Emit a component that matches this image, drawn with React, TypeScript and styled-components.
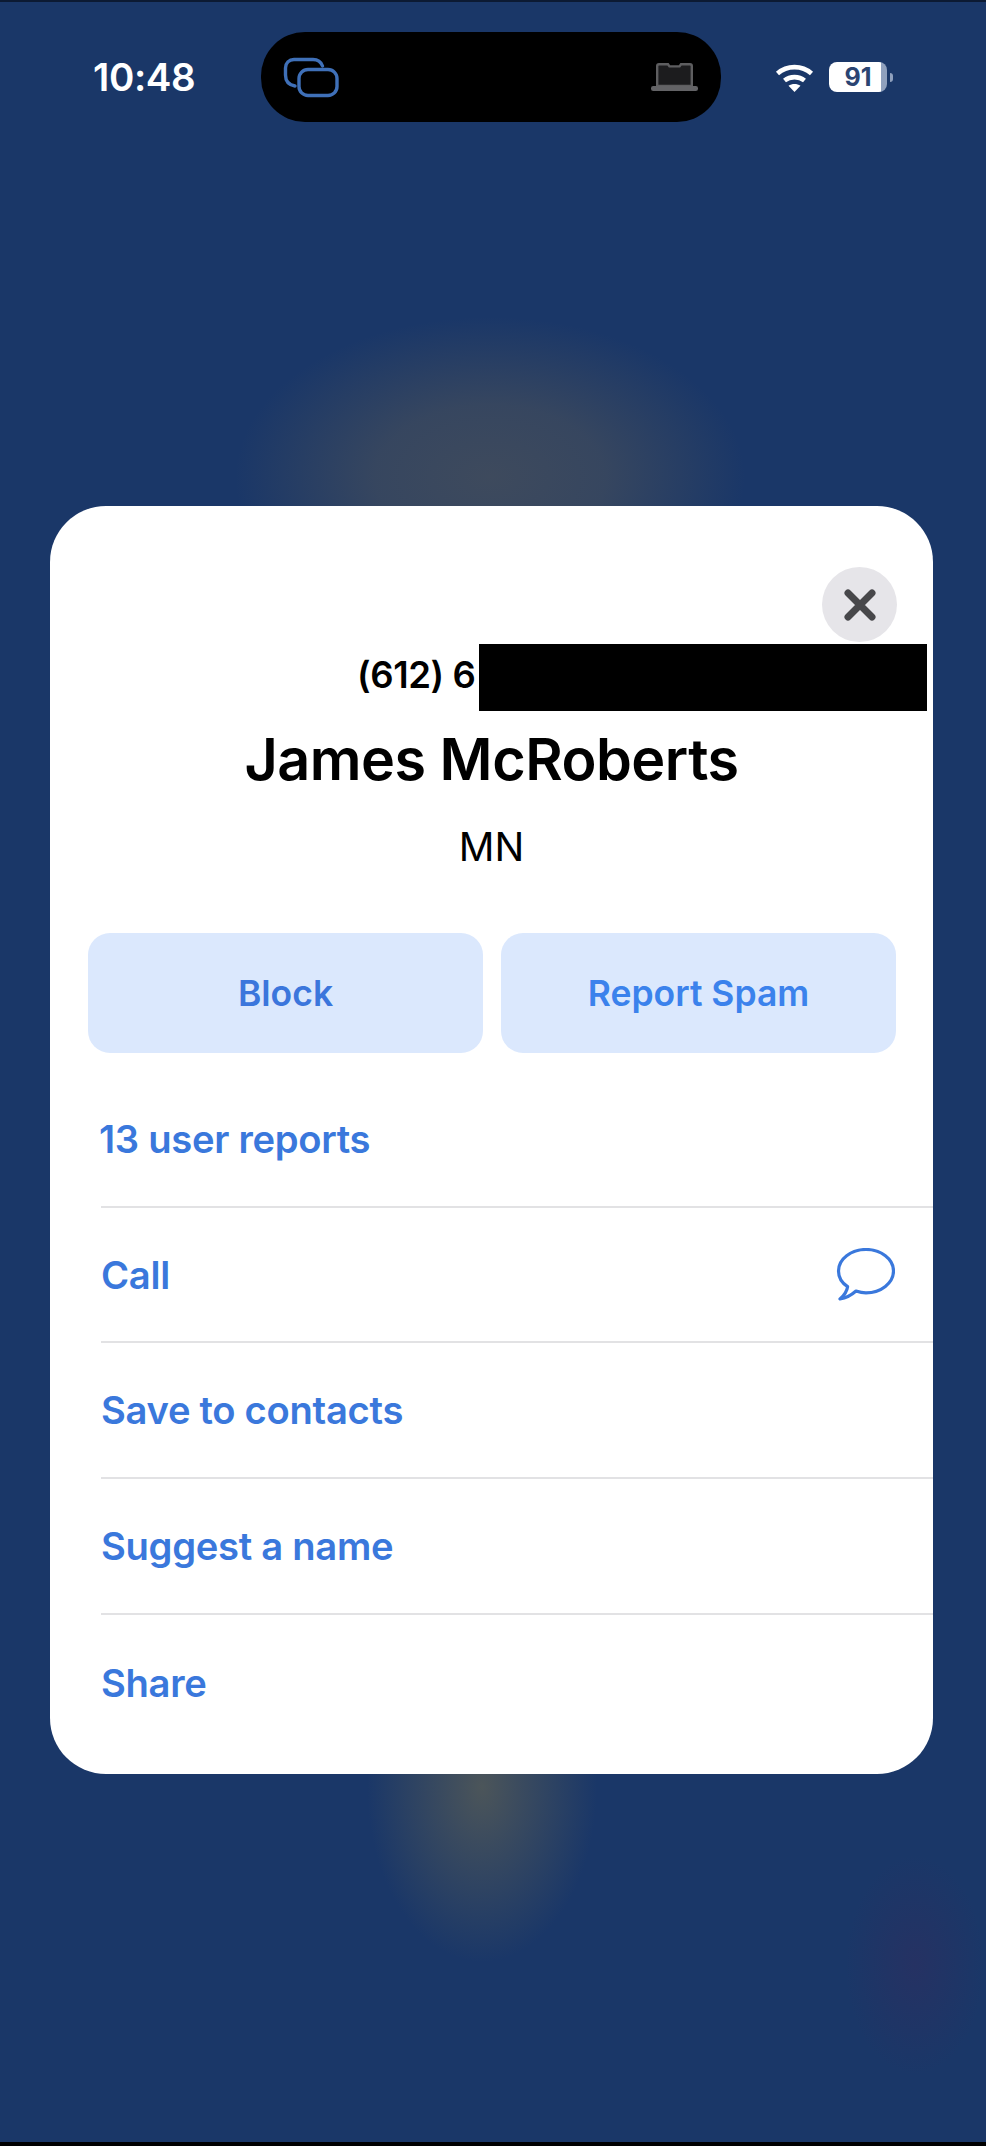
import React from 'react';
import styled, { createGlobalStyle } from 'styled-components';

const GlobalStyle = createGlobalStyle`
  html, body {
    margin: 0;
    padding: 0;
    background: #1a3768;
  }
  * {
    box-sizing: border-box;
  }
`;

const Page = styled.div`
  width: 986px;
  height: 2146px;
  overflow: hidden;
  border-top: 2px solid #0c1a33;
  border-bottom: 4px solid #000;
  font-family: Inter, 'Liberation Sans', sans-serif;
  background:
    radial-gradient(ellipse 115px 175px at 482px 1785px, rgba(125, 115, 75, 0.5) 0%, rgba(125, 115, 75, 0.32) 35%, rgba(125, 115, 75, 0) 100%),
    radial-gradient(ellipse 255px 160px at 490px 475px, rgba(120, 105, 75, 0.38) 0%, rgba(120, 105, 75, 0.3) 45%, rgba(120, 105, 75, 0) 100%),
    radial-gradient(ellipse 70px 110px at 915px 1963px, rgba(70, 35, 85, 0.26), rgba(70, 35, 85, 0) 100%),
    #1a3768;
`;

const StatusBar = styled.div`
  display: flex;
  align-items: center;
  height: 90px;
  margin-top: 30px;
  padding-left: 93px;
`;

const Time = styled.span`
  width: 168px;
  color: #fff;
  font-size: 38.5px;
  font-weight: 600;
  letter-spacing: -0.4px;
`;

const Island = styled.div`
  display: flex;
  align-items: center;
  justify-content: space-between;
  width: 460px;
  height: 90px;
  padding: 0 23px 0 22px;
  border-radius: 44px;
  background: #000;
`;

const StatusIcons = styled.div`
  display: flex;
  align-items: center;
  gap: 15px;
  margin-left: 54px;
`;

const Battery = styled.div`
  display: flex;
  align-items: center;
  gap: 3px;
`;

const BatteryBody = styled.div`
  display: flex;
  align-items: center;
  justify-content: center;
  width: 58px;
  height: 30px;
  border-radius: 8px;
  background: linear-gradient(90deg, #fff 0 90%, #8fa0bd 90%);
  color: #2a4472;
  font-size: 25px;
  font-weight: 700;
`;

const BatteryTip = styled.div`
  width: 3px;
  height: 9px;
  border-radius: 0 3px 3px 0;
  background: #8fa0bd;
`;

const Card = styled.div`
  display: flex;
  flex-direction: column;
  width: 883px;
  height: 1268px;
  margin: 384px 0 0 50px;
  padding-top: 61px;
  overflow: hidden;
  border-radius: 56px;
  background: #fff;
`;

const CloseRow = styled.div`
  display: flex;
  justify-content: flex-end;
  padding-right: 36px;
`;

const CloseButton = styled.button`
  display: flex;
  align-items: center;
  justify-content: center;
  width: 75px;
  height: 75px;
  padding: 0;
  border: none;
  border-radius: 50%;
  background: #e6e5e9;
`;

const PhoneRow = styled.div`
  display: flex;
  align-items: center;
  height: 68px;
  margin-top: 1px;
  padding-left: 307px;
`;

const PhoneText = styled.span`
  width: 122px;
  padding-bottom: 4px;
  color: #000;
  font-size: 36.5px;
  font-weight: 600;
  letter-spacing: -0.4px;
  white-space: nowrap;
`;

const Redaction = styled.div`
  width: 448px;
  height: 67px;
  background: #000;
`;

const Name = styled.h1`
  margin: 15px 0 0;
  color: #000;
  font-size: 57.5px;
  line-height: 66px;
  font-weight: 600;
  text-align: center;
  letter-spacing: -0.5px;
`;

const Region = styled.div`
  margin-top: 32px;
  color: #000;
  font-size: 39.5px;
  line-height: 46px;
  font-weight: 400;
  text-align: center;
`;

const Actions = styled.div`
  display: grid;
  grid-template-columns: 395px 395px;
  gap: 18px;
  margin-top: 63px;
  padding-left: 38px;
`;

const ActionButton = styled.button<{ $bright?: boolean }>`
  height: 120px;
  border: none;
  border-radius: 22px;
  background: #dbe8fd;
  color: ${(p) => (p.$bright ? '#3b82ec' : '#3b76dc')};
  font-family: inherit;
  font-size: 35.5px;
  font-weight: 600;
`;

const Rows = styled.div`
  display: flex;
  flex-direction: column;
  margin: 19px 0 0 51px;
`;

const Row = styled.div<{ $last?: boolean }>`
  display: flex;
  align-items: center;
  justify-content: space-between;
  height: 135.7px;
  padding-right: 38px;
  border-bottom: ${(p) => (p.$last ? 'none' : '2px solid #e2e2e4')};
  color: #3a78dc;
  font-size: 38.2px;
  font-weight: 600;
  letter-spacing: -0.3px;
`;

const RowLabel = styled.span<{ $shift?: boolean }>`
  margin-left: ${(p) => (p.$shift ? '-2px' : '0')};
`;

const rows = ['13 user reports', 'Call', 'Save to contacts', 'Suggest a name', 'Share'];

const CopiesIcon = () => (
  <svg width="56" height="41" viewBox="0 0 56 41" fill="none" stroke="#3f70b8" strokeWidth="3.4">
    <path d="M12 29 C6 28 2.5 24 2.5 18 V11 C2.5 6 6 2.5 11 2.5 H30 C35 2.5 38 5 39.5 9" strokeLinecap="round" />
    <rect x="16" y="12.5" width="38" height="26" rx="9" />
  </svg>
);

const LaptopIcon = () => (
  <svg width="47" height="28" viewBox="0 0 47 28">
    <path d="M8 1.2 H17 L18.5 3.4 H28.5 L30 1.2 H39 C40 1.2 40.8 2 40.8 3 V23 H6.2 V3 C6.2 2 7 1.2 8 1.2 Z" fill="#1c1c1e" stroke="#5e5e60" strokeWidth="2.4" />
    <rect x="0" y="23" width="47" height="5" rx="2.2" fill="#636366" />
  </svg>
);

const WifiIcon = () => (
  <svg width="39" height="29" viewBox="0 0 39 29" fill="none" stroke="#fff" strokeWidth="4.6">
    <path d="M2.5 10.5 C12 2 27 2 36.5 10.5" />
    <path d="M9.5 17.5 C15 13 24 13 29.5 17.5" />
    <path d="M19.5 29 L13.5 22.8 C17 20.4 22 20.4 25.5 22.8 Z" fill="#fff" stroke="none" />
  </svg>
);

const CloseIcon = () => (
  <svg width="34" height="34" viewBox="0 0 34 34" fill="none" stroke="#47474a" strokeWidth="7" strokeLinecap="round">
    <path d="M5 5 L29 29 M29 5 L5 29" />
  </svg>
);

const ChatIcon = () => (
  <svg width="60" height="53" viewBox="0 0 60 53" fill="none" stroke="#3a78dc" strokeWidth="3.2" strokeLinejoin="round">
    <path d="M21 43 C24 44 27.5 44.8 31 44.8 C46 44.8 58.5 35 58.5 23 C58.5 11 46 1.5 31 1.5 C16 1.5 3.5 11 3.5 23 C3.5 29.5 7 35 12.6 38.7 C12 43 9 47.5 5 51 C11 50 16.5 47 21 43 Z" />
  </svg>
);

export default function App() {
  return (
    <>
      <GlobalStyle />
      <Page>
        <StatusBar>
          <Time>10:48</Time>
          <Island>
            <CopiesIcon />
            <LaptopIcon />
          </Island>
          <StatusIcons>
            <WifiIcon />
            <Battery>
              <BatteryBody>91</BatteryBody>
              <BatteryTip />
            </Battery>
          </StatusIcons>
        </StatusBar>
        <Card>
          <CloseRow>
            <CloseButton>
              <CloseIcon />
            </CloseButton>
          </CloseRow>
          <PhoneRow>
            <PhoneText>(612) 6</PhoneText>
            <Redaction />
          </PhoneRow>
          <Name>James McRoberts</Name>
          <Region>MN</Region>
          <Actions>
            <ActionButton>Block</ActionButton>
            <ActionButton $bright>Report Spam</ActionButton>
          </Actions>
          <Rows>
            {rows.map((label, i) => (
              <Row key={label} $last={i === rows.length - 1}>
                <RowLabel $shift={i === 0}>{label}</RowLabel>
                {label === 'Call' && <ChatIcon />}
              </Row>
            ))}
          </Rows>
        </Card>
      </Page>
    </>
  );
}
